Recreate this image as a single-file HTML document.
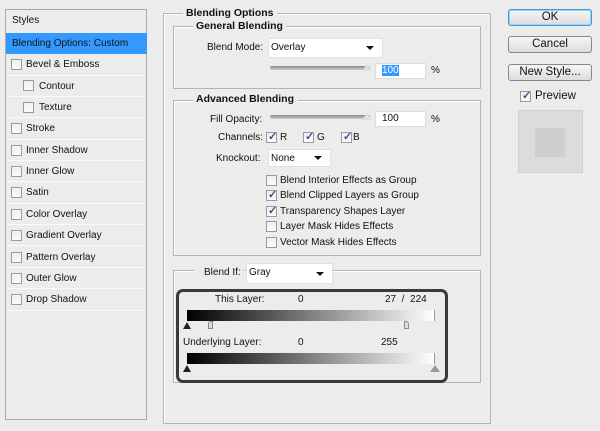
<!DOCTYPE html>
<html><head><style>
*{box-sizing:border-box;margin:0;padding:0}
body{width:600px;height:431px;background:#ececec;font-family:"Liberation Sans",sans-serif;font-size:10px;color:#111;position:relative;overflow:hidden}
.a{position:absolute;white-space:nowrap;line-height:14px}
.gb{position:absolute;border:1px solid #b4b4b4;box-shadow:1px 1px 0 #fff inset}
.t{position:absolute;background:#ececec;padding:0 3px;font-weight:bold;font-size:10.5px;line-height:14px}
.cb{position:absolute;width:11px;height:11px;border:1px solid #9a9a9a;background:linear-gradient(#f0f0f0,#fafafa)}
.cb.k::after{content:"✓";position:absolute;left:1px;top:-3px;font-size:11px;color:#3a4fa0;font-weight:bold;line-height:14px}
.dd{position:absolute;background:#fff;border:1px solid #e0e0e0}
.dd::after{content:"";position:absolute;right:8px;top:50%;margin-top:-2px;border:4px solid transparent;border-top:4px solid #111;border-bottom:0}
.in{position:absolute;background:#fff;border:1px solid #dcdcdc;padding-left:6px;line-height:14px}
.sl{position:absolute;height:4px;background:linear-gradient(#888,#ccc);border-radius:2px}
.btn{position:absolute;left:508px;width:84px;height:17px;border:1px solid #888;border-radius:3px;background:linear-gradient(#f6f6f6,#dcdcdc);text-align:center;font-size:11.5px;line-height:15px}
</style></head><body>
<div class="a" style="left:5px;top:9px;width:142px;height:411px;border:1px solid #a8a8a8;background:#ececec"></div>
<div class="a" style="left:12px;top:14px">Styles</div>
<div class="a" style="left:6px;top:33px;width:141px;height:21px;background:#3399ff"></div>
<div class="a" style="left:12px;top:37px">Blending Options: Custom</div>
<div class="cb" style="left:11px;top:59px"></div><div class="a" style="left:26px;top:58px">Bevel &amp; Emboss</div>
<div class="cb" style="left:23px;top:80px"></div><div class="a" style="left:39px;top:80px">Contour</div>
<div class="cb" style="left:23px;top:102px"></div><div class="a" style="left:39px;top:101px">Texture</div>
<div class="cb" style="left:11px;top:123px"></div><div class="a" style="left:26px;top:122px">Stroke</div>
<div class="cb" style="left:11px;top:145px"></div><div class="a" style="left:26px;top:144px">Inner Shadow</div>
<div class="cb" style="left:11px;top:166px"></div><div class="a" style="left:26px;top:165px">Inner Glow</div>
<div class="cb" style="left:11px;top:187px"></div><div class="a" style="left:26px;top:186px">Satin</div>
<div class="cb" style="left:11px;top:209px"></div><div class="a" style="left:26px;top:208px">Color Overlay</div>
<div class="cb" style="left:11px;top:230px"></div><div class="a" style="left:26px;top:229px">Gradient Overlay</div>
<div class="cb" style="left:11px;top:252px"></div><div class="a" style="left:26px;top:251px">Pattern Overlay</div>
<div class="cb" style="left:11px;top:273px"></div><div class="a" style="left:26px;top:272px">Outer Glow</div>
<div class="cb" style="left:11px;top:294px"></div><div class="a" style="left:26px;top:293px">Drop Shadow</div>
<div class="a" style="left:8px;top:75px;width:137px;border-top:1px solid #fafafa"></div>
<div class="a" style="left:8px;top:96px;width:137px;border-top:1px solid #fafafa"></div>
<div class="a" style="left:8px;top:117px;width:137px;border-top:1px solid #fafafa"></div>
<div class="a" style="left:8px;top:139px;width:137px;border-top:1px solid #fafafa"></div>
<div class="a" style="left:8px;top:160px;width:137px;border-top:1px solid #fafafa"></div>
<div class="a" style="left:8px;top:181px;width:137px;border-top:1px solid #fafafa"></div>
<div class="a" style="left:8px;top:203px;width:137px;border-top:1px solid #fafafa"></div>
<div class="a" style="left:8px;top:224px;width:137px;border-top:1px solid #fafafa"></div>
<div class="a" style="left:8px;top:245px;width:137px;border-top:1px solid #fafafa"></div>
<div class="a" style="left:8px;top:267px;width:137px;border-top:1px solid #fafafa"></div>
<div class="a" style="left:8px;top:288px;width:137px;border-top:1px solid #fafafa"></div>
<div class="a" style="left:8px;top:310px;width:137px;border-top:1px solid #fafafa"></div>

<div class="gb" style="left:163px;top:13px;width:328px;height:411px"></div>
<div class="t" style="left:183px;top:6px">Blending Options</div>
<div class="gb" style="left:173px;top:26px;width:308px;height:63px"></div>
<div class="t" style="left:193px;top:19px">General Blending</div>
<div class="a" style="left:207px;top:41px">Blend Mode:</div>
<div class="dd" style="left:268px;top:38px;width:115px;height:20px"></div>
<div class="a" style="left:271px;top:41px">Overlay</div>
<div class="sl" style="left:270px;top:66px;width:100px"></div>
<div class="a" style="left:362px;top:64px;width:0;height:0;border:5px solid transparent;border-bottom:7px solid #ddd;border-top:0"></div>
<div class="in" style="left:375px;top:63px;width:51px;height:16px"><span style="background:#3399ff;color:#fff">100</span></div>
<div class="a" style="left:431px;top:64px">%</div>

<div class="gb" style="left:173px;top:100px;width:308px;height:156px"></div>
<div class="t" style="left:193px;top:92px">Advanced Blending</div>
<div class="a" style="left:210px;top:113px">Fill Opacity:</div>
<div class="sl" style="left:270px;top:115px;width:100px"></div>
<div class="a" style="left:362px;top:113px;width:0;height:0;border:5px solid transparent;border-bottom:7px solid #ddd;border-top:0"></div>
<div class="in" style="left:375px;top:111px;width:51px;height:16px">100</div>
<div class="a" style="left:431px;top:113px">%</div>
<div class="a" style="left:218px;top:131px">Channels:</div>
<div class="cb k" style="left:266px;top:132px"></div><div class="a" style="left:280px;top:131px">R</div>
<div class="cb k" style="left:303px;top:132px"></div><div class="a" style="left:317px;top:131px">G</div>
<div class="cb k" style="left:341px;top:132px"></div><div class="a" style="left:353px;top:131px">B</div>
<div class="a" style="left:216px;top:152px">Knockout:</div>
<div class="dd" style="left:268px;top:149px;width:63px;height:18px"></div>
<div class="a" style="left:271px;top:152px">None</div>
<div class="cb" style="left:266px;top:175px"></div><div class="a" style="left:280px;top:174px">Blend Interior Effects as Group</div>
<div class="cb k" style="left:266px;top:190px"></div><div class="a" style="left:280px;top:189px">Blend Clipped Layers as Group</div>
<div class="cb k" style="left:266px;top:206px"></div><div class="a" style="left:280px;top:205px">Transparency Shapes Layer</div>
<div class="cb" style="left:266px;top:221px"></div><div class="a" style="left:280px;top:220px">Layer Mask Hides Effects</div>
<div class="cb" style="left:266px;top:237px"></div><div class="a" style="left:280px;top:236px">Vector Mask Hides Effects</div>

<div class="gb" style="left:173px;top:270px;width:308px;height:113px"></div>
<div class="a" style="left:194px;top:262px;width:50px;height:12px;background:#ececec"></div>
<div class="a" style="left:204px;top:266px">Blend If:</div>
<div class="dd" style="left:246px;top:263px;width:87px;height:21px"></div>
<div class="a" style="left:249px;top:266px">Gray</div>
<div class="a" style="left:176px;top:289px;width:272px;height:94px;border:3px solid #3a3a3a;border-radius:7px;background:#ececec"></div>
<div class="a" style="left:215px;top:293px">This Layer:</div>
<div class="a" style="left:298px;top:293px">0</div>
<div class="a" style="left:385px;top:293px">27 &nbsp;/ &nbsp;224</div>
<div class="a" style="left:187px;top:310px;width:248px;height:11px;background:linear-gradient(90deg,#000,#fff);border-right:1px solid #999"></div>
<div class="a" style="left:183px;top:322px;width:0;height:0;border:4px solid transparent;border-bottom:7px solid #222;border-top:0"></div>
<div class="a" style="left:208px;top:321px;width:5px;height:8px;background:#ddd;border:1px solid #888;border-radius:3px 0 0 0"></div>
<div class="a" style="left:404px;top:321px;width:5px;height:8px;background:#ddd;border:1px solid #888;border-radius:0 3px 0 0"></div>
<div class="a" style="left:183px;top:336px">Underlying Layer:</div>
<div class="a" style="left:298px;top:336px">0</div>
<div class="a" style="left:381px;top:336px">255</div>
<div class="a" style="left:187px;top:353px;width:248px;height:11px;background:linear-gradient(90deg,#000,#fff);border-right:1px solid #999"></div>
<div class="a" style="left:183px;top:365px;width:0;height:0;border:4px solid transparent;border-bottom:7px solid #222;border-top:0"></div>
<div class="a" style="left:430px;top:365px;width:0;height:0;border:5px solid transparent;border-bottom:7px solid #999;border-top:0"></div>

<div class="btn" style="top:9px;border-color:#3c9ad8;box-shadow:0 0 0 1px #9cd4f4 inset">OK</div>
<div class="btn" style="top:36px">Cancel</div>
<div class="btn" style="top:64px">New Style...</div>
<div class="cb k" style="left:520px;top:91px"></div><div class="a" style="left:535px;top:89px;font-size:11.5px">Preview</div>
<div class="a" style="left:518px;top:110px;width:65px;height:63px;background:#dcdcdc;border:1px solid #d0d0d0"></div>
<div class="a" style="left:535px;top:128px;width:30px;height:29px;background:#cfcfcf"></div>
</body></html>
